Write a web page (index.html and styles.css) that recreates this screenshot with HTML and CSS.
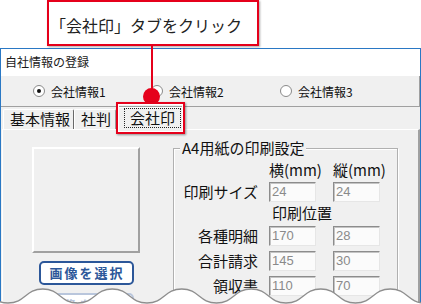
FILE: index.html
```html
<!DOCTYPE html>
<html lang="ja">
<head>
  <meta charset="UTF-8" />
  <meta name="viewport" content="width=device-width, initial-scale=1" />
  <title>自社情報の登録</title>
  <link rel="stylesheet" href="styles.css">
</head>
<body>
  <div class="callout-row">
    <div class="callout">「会社印」タブをクリック</div>
  </div>

  <div class="window">
    <div class="titlebar">自社情報の登録</div>

    <div class="company-select">
      <label class="radio checked"><span class="circle"></span>会社情報1</label>
      <label class="radio wide"><span class="circle"></span>会社情報2</label>
      <label class="radio"><span class="circle"></span>会社情報3</label>
    </div>

    <div class="tabs">
      <div class="tab first">基本情報</div>
      <div class="tab second">社判</div>
      <div class="tab active"><span class="focus">会社印</span></div>
    </div>

    <div class="panel">
      <div class="stamp-col">
        <div class="stamp-preview"></div>
        <button class="pick-btn">画像を選択</button>
        <button class="pick-btn faded">画像を削除</button>
      </div>

      <div class="group">
        <div class="legend">A4用紙の印刷設定</div>
        <div class="grid">
          <div class="head col2">横(mm)</div>
          <div class="head col3">縦(mm)</div>

          <div class="lbl">印刷サイズ</div>
          <div class="field">24</div>
          <div class="field">24</div>

          <div class="pos">印刷位置</div>

          <div class="lbl">各種明細</div>
          <div class="field">170</div>
          <div class="field">28</div>

          <div class="lbl">合計請求</div>
          <div class="field">145</div>
          <div class="field">30</div>

          <div class="lbl">領収書</div>
          <div class="field">110</div>
          <div class="field">70</div>
        </div>
      </div>
    </div>
  </div>

  <!-- annotation overlay -->
  <div class="pointer-line"></div>
  <div class="pointer-dot"></div>
  <div class="tab-highlight"></div>

  <svg class="tear" width="421" height="20" viewBox="0 0 421 20">
    <path class="tear-fill" d="M-61.5 19 C-44.1 19 -44.1 5 -26.75 5 C-9.4 5 -9.4 19 8 19 C25.4 19 25.4 5 42.75 5 C60.1 5 60.1 19 77.5 19 C94.9 19 94.9 5 112.25 5 C129.6 5 129.6 19 147 19 C164.4 19 164.4 5 181.75 5 C199.1 5 199.1 19 216.5 19 C233.9 19 233.9 5 251.25 5 C268.6 5 268.6 19 286 19 C303.4 19 303.4 5 320.75 5 C338.1 5 338.1 19 355.5 19 C372.9 19 372.9 5 390.25 5 C407.6 5 407.6 19 425 19 L425 30 L-61.5 30 Z" />
    <path class="tear-line" d="M-61.5 19 C-44.1 19 -44.1 5 -26.75 5 C-9.4 5 -9.4 19 8 19 C25.4 19 25.4 5 42.75 5 C60.1 5 60.1 19 77.5 19 C94.9 19 94.9 5 112.25 5 C129.6 5 129.6 19 147 19 C164.4 19 164.4 5 181.75 5 C199.1 5 199.1 19 216.5 19 C233.9 19 233.9 5 251.25 5 C268.6 5 268.6 19 286 19 C303.4 19 303.4 5 320.75 5 C338.1 5 338.1 19 355.5 19 C372.9 19 372.9 5 390.25 5 C407.6 5 407.6 19 425 19" />
  </svg>
</body>
</html>
```

FILE: styles.css
```css
html, body {
  margin: 0;
  padding: 0;
}

body {
  width: 421px;
  height: 304px;
  overflow: hidden;
  position: relative;
  background: #fff;
  color: #111;
  font-family: "Noto Sans CJK JP", "Noto Sans", sans-serif;
}

/* callout */
.callout-row {
  height: 48px;
}

.callout {
  margin-left: 47px;
  width: 212px;
  height: 46px;
  box-sizing: border-box;
  border: 2px solid #e5001b;
  background: #fff;
  padding: 5px 0 0 1px;
  font-size: 16px;
  line-height: 36px;
  color: #222;
  box-shadow: 1px 1px 2px rgba(0,0,0,0.35);
}

/* window */
.window {
  height: 256px;
  box-sizing: border-box;
  border: 1px solid #2a78c4;
  border-bottom: none;
  background: #f0f0f0;
  display: flex;
  flex-direction: column;
  overflow: hidden;
}

.titlebar {
  flex-shrink: 0;
  height: 27px;
  background: #fff;
  font-size: 12px;
  line-height: 25px;
  padding-left: 4px;
  color: #1a1a1a;
}

.company-select {
  flex-shrink: 0;
  height: 30px;
  display: flex;
  align-items: center;
  padding-left: 32px;
  border-bottom: 1px solid #a0a0a0;
  border-right: 1px solid #a0a0a0;
  font-size: 12px;
}

.radio {
  display: flex;
  align-items: center;
  gap: 6px;
  width: 118px;
}

.radio.wide {
  width: 129px;
}

.circle {
  width: 12px;
  height: 12px;
  box-sizing: border-box;
  border: 1px solid #8a8a8a;
  border-radius: 50%;
  background: #fff;
  display: flex;
  align-items: center;
  justify-content: center;
}

.radio.checked .circle::after {
  content: "";
  width: 4px;
  height: 4px;
  border-radius: 50%;
  background: #111;
}

/* tabs */
.tabs {
  flex-shrink: 0;
  height: 22px;
  display: flex;
  align-items: flex-end;
  padding-left: 2px;
  font-size: 15px;
}

.tab {
  height: 20px;
  box-sizing: border-box;
  border-top: 1px solid #fff;
  border-left: 1px solid #fff;
  border-right: 1px solid #696969;
  border-top-left-radius: 2px;
  border-top-right-radius: 2px;
  line-height: 18px;
  padding-left: 6px;
}

.tab.first {
  width: 71px;
}

.tab.second {
  width: 42px;
  padding-left: 6px;
  border-right-color: #a0a0a0;
}

.tab.active {
  width: 66px;
  height: 23px;
  margin-left: 2px;
  margin-bottom: -1px;
  padding-left: 5px;
  position: relative;
  z-index: 1;
  background: #f0f0f0;
}

.focus {
  display: block;
  width: 57px;
  height: 20px;
  box-sizing: border-box;
  border: 1px dotted #222;
  text-align: center;
  line-height: 18px;
}

/* panel */
.panel {
  flex: 1;
  min-height: 0;
  overflow: hidden;
  margin-left: 1px;
  border-top: 1px solid #fff;
  border-left: 1px solid #fff;
  border-right: 2px solid #a0a0a0;
  padding-top: 17px;
  display: flex;
  align-items: flex-start;
}

.stamp-col {
  flex-shrink: 0;
  margin-left: 29px;
  width: 108px;
  display: flex;
  flex-direction: column;
  align-items: center;
}

.stamp-preview {
  width: 108px;
  height: 106px;
  box-sizing: border-box;
  border: 2px solid;
  border-color: #fff #a0a0a0 #a0a0a0 #fff;
  background: #f0f0f0;
}

.pick-btn {
  flex-shrink: 0;
  margin-top: 8px;
  width: 95px;
  height: 24px;
  padding: 0 0 0 2px;
  border: 2px solid #2c5799;
  border-radius: 5px;
  background: #fff;
  color: #2c5799;
  font-family: "Noto Sans CJK JP", sans-serif;
  font-size: 13px;
  font-weight: bold;
  letter-spacing: 2px;
  line-height: 18px;
}

.pick-btn.faded {
  border-color: #b9c6dc;
  color: #b9c6dc;
}

.group {
  flex-shrink: 0;
  margin-left: 33px;
  margin-top: 1px;
  width: 225px;
  height: 200px;
  box-sizing: border-box;
  border: 1px solid #b0b0b0;
  box-shadow: inset 1px 1px #fff, 1px 1px #fff;
}

.legend {
  display: table;
  margin: -10px 0 0 6px;
  padding: 0 2px;
  background: #f0f0f0;
  font-size: 15px;
  line-height: 18px;
}

.grid {
  margin-top: 2px;
  display: grid;
  grid-template-columns: 95px 64px 47px;
  grid-template-rows: 22px 22px 20px 25px 25px 25px;
  align-items: center;
  font-size: 15px;
  line-height: 18px;
}

.head {
  white-space: nowrap;
}

.head.col2 {
  grid-column: 2;
}

.head.col3 {
  grid-column: 3;
}

.lbl {
  grid-column: 1;
  text-align: right;
  padding-right: 11px;
}

.pos {
  grid-column: 1 / 3;
  text-align: right;
  padding-right: 1px;
}

.field {
  width: 47px;
  height: 20px;
  box-sizing: border-box;
  border: 1px solid;
  border-color: #8c8c8c #e6e6e6 #e6e6e6 #8c8c8c;
  box-shadow: inset 1px 1px #c4c4c4;
  background: #fbfbfb;
  color: #8a8a8a;
  font-family: "Liberation Sans", sans-serif;
  font-size: 13px;
  line-height: 18px;
  padding-left: 2px;
}

/* annotation */
.pointer-line {
  position: absolute;
  left: 151px;
  top: 46px;
  width: 2px;
  height: 50px;
  background: #e5001b;
}

.pointer-dot {
  position: absolute;
  left: 143px;
  top: 88px;
  width: 17px;
  height: 17px;
  border-radius: 50%;
  background: #e5001b;
}

.tab-highlight {
  position: absolute;
  left: 116px;
  top: 102px;
  width: 69px;
  height: 32px;
  box-sizing: border-box;
  border: 2px solid #e5001b;
  box-shadow: inset 0 0 0 1px #fff, 1px 1px 2px rgba(0,0,0,0.4);
  z-index: 2;
}

.tear {
  position: absolute;
  left: 0;
  top: 284px;
  z-index: 3;
}

.tear-fill {
  fill: #fff;
}

.tear-line {
  fill: none;
  stroke: #8e8e8e;
  stroke-width: 1.3;
}
```
